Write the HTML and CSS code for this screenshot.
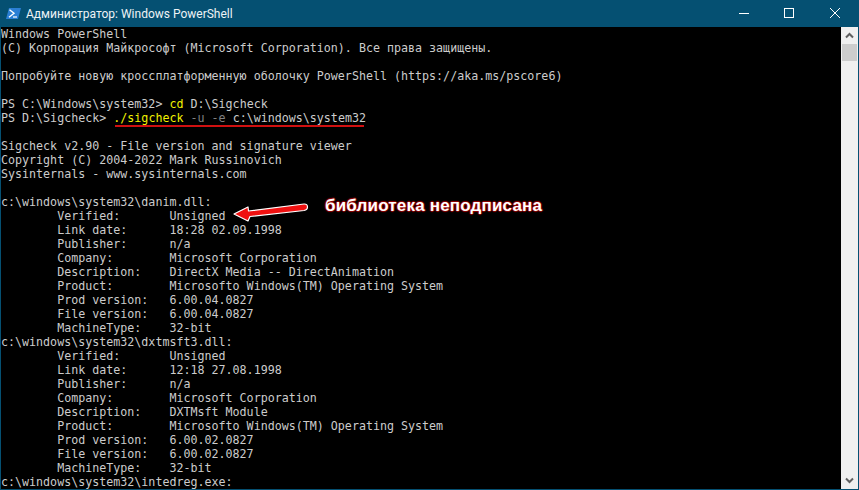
FILE: index.html
```html
<!DOCTYPE html>
<html lang="ru">
<head>
<meta charset="utf-8">
<title>Администратор: Windows PowerShell</title>
<link rel="stylesheet" href="styles.css">
</head>
<body>
<div class="window">
  <header class="titlebar">
    <svg class="app-icon" width="15" height="11" viewBox="0 0 15 11">
      <path d="M3 0h12l-3 11H0z" fill="#2a7fd4"/>
      <path d="M3.500 1.800l4.500 3.500-5 3.900" fill="none" stroke="#fff" stroke-width="1.400"/>
      <path d="M7 9h4" stroke="#fff" stroke-width="1.200"/>
    </svg>
    <span class="title">Администратор: Windows PowerShell</span>
    <div class="controls">
      <span class="ctl ctl-min"><svg width="10" height="10" viewBox="0 0 10 10"><path d="M0 5.500h10" stroke="#fff" stroke-width="1"/></svg></span>
      <span class="ctl"><svg width="10" height="10" viewBox="0 0 10 10"><rect x=".5" y=".5" width="9" height="9" fill="none" stroke="#fff" stroke-width="1"/></svg></span>
      <span class="ctl"><svg width="10" height="10" viewBox="0 0 10 10"><path d="M0 0l10 10M10 0l-10 10" stroke="#fff" stroke-width="1"/></svg></span>
    </div>
  </header>
  <div class="content">
    <div class="console">
      <div class="line">Windows PowerShell</div>
      <div class="line">(C) Корпорация Майкрософт (Microsoft Corporation). Все права защищены.</div>
      <div class="line"></div>
      <div class="line">Попробуйте новую кроссплатформенную оболочку PowerShell (https://aka.ms/pscore6)</div>
      <div class="line"></div>
      <div class="line">PS C:\Windows\system32&gt; <span class="cmd">cd</span> D:\Sigcheck</div>
      <div class="line">PS D:\Sigcheck&gt; <span class="cmd">./sigcheck</span> <span class="arg">-u -e</span> c:\windows\system32</div>
      <div class="line"></div>
      <div class="line">Sigcheck v2.90 - File version and signature viewer</div>
      <div class="line">Copyright (C) 2004-2022 Mark Russinovich</div>
      <div class="line">Sysinternals - www.sysinternals.com</div>
      <div class="line"></div>
      <div class="line">c:\windows\system32\danim.dll:</div>
      <div class="line">        Verified:       Unsigned</div>
      <div class="line">        Link date:      18:28 02.09.1998</div>
      <div class="line">        Publisher:      n/a</div>
      <div class="line">        Company:        Microsoft Corporation</div>
      <div class="line">        Description:    DirectX Media -- DirectAnimation</div>
      <div class="line">        Product:        Microsofto Windows(TM) Operating System</div>
      <div class="line">        Prod version:   6.00.04.0827</div>
      <div class="line">        File version:   6.00.04.0827</div>
      <div class="line">        MachineType:    32-bit</div>
      <div class="line">c:\windows\system32\dxtmsft3.dll:</div>
      <div class="line">        Verified:       Unsigned</div>
      <div class="line">        Link date:      12:18 27.08.1998</div>
      <div class="line">        Publisher:      n/a</div>
      <div class="line">        Company:        Microsoft Corporation</div>
      <div class="line">        Description:    DXTMsft Module</div>
      <div class="line">        Product:        Microsofto Windows(TM) Operating System</div>
      <div class="line">        Prod version:   6.00.02.0827</div>
      <div class="line">        File version:   6.00.02.0827</div>
      <div class="line">        MachineType:    32-bit</div>
      <div class="line">c:\windows\system32\intedreg.exe:</div>
    </div>
    <div class="underline"></div>
    <svg class="arrow" width="76" height="24" viewBox="0 0 76 24">
      <path d="M1 14L15 7L15.500 11L71 4Q74.500 3.800 74.500 7Q74.500 10 71 10.500L17 16.500L15 21Z" fill="#f01010" stroke="#fff" stroke-width="1.200" stroke-linejoin="round"/>
    </svg>
    <div class="note">библиотека неподписана</div>
    <aside class="scrollbar">
      <span class="sb-btn"><svg width="9" height="7" viewBox="0 0 9 7"><path d="M1 5.500l3.500-3.500 3.500 3.500" fill="none" stroke="#606060" stroke-width="2"/></svg></span>
      <div class="thumb"></div>
      <div class="track"></div>
      <span class="sb-btn"><svg width="9" height="7" viewBox="0 0 9 7"><path d="M1 1.500l3.500 3.500 3.500-3.500" fill="none" stroke="#606060" stroke-width="2"/></svg></span>
    </aside>
  </div>
</div>
</body>
</html>
```
FILE: styles.css
```css
html, body { margin: 0; padding: 0; background: #000; }
.window {
  width: 859px; height: 490px; box-sizing: border-box;
  display: flex; flex-direction: column;
  border: 1px solid #055072; border-top: 0;
  overflow: hidden;
}
.titlebar {
  height: 27px; flex: none; background: #055072;
  display: flex; align-items: center; padding-left: 5px;
  font: 12px Roboto, "Noto Sans", sans-serif;
}
.app-icon { margin-right: 5px; flex: none; }
.title { color: #eef3f6; }
.controls { margin-left: auto; display: flex; }
.ctl { width: 46px; height: 27px; box-sizing: border-box; padding-bottom: 1px; display: flex; align-items: center; justify-content: center; }
.ctl-min { padding-left: 2px; }
.content { position: relative; flex: 1; display: flex; min-height: 0; }
.console {
  flex: 1; background: #000; color: #cccccc;
  font: 11.67px/14px "DejaVu Sans Mono", monospace; overflow: hidden;
}
.line { height: 14px; white-space: pre; }
.cmd { color: #f2f200; }
.arg { color: #808080; }
.underline { position: absolute; left: 114px; top: 98px; width: 249px; height: 2px; background: #d01010; }
.arrow { position: absolute; left: 232px; top: 173px; }
.note {
  position: absolute; left: 324px; top: 169px;
  font: bold 17px/20px "Liberation Sans", sans-serif; color: #fff; letter-spacing: 0.18px;
  text-shadow: 1px 0 1px #9a0000, -1px 0 1px #9a0000, 0 1px 1px #9a0000, 0 -1px 1px #9a0000;
}
.scrollbar { width: 17px; flex: none; background: #f0f0f0; display: flex; flex-direction: column; }
.sb-btn { height: 17px; flex: none; display: flex; align-items: center; justify-content: center; }
.thumb { height: 17px; flex: none; background: #cdcdcd; margin: 0 1px; }
.track { flex: 1; }
```
